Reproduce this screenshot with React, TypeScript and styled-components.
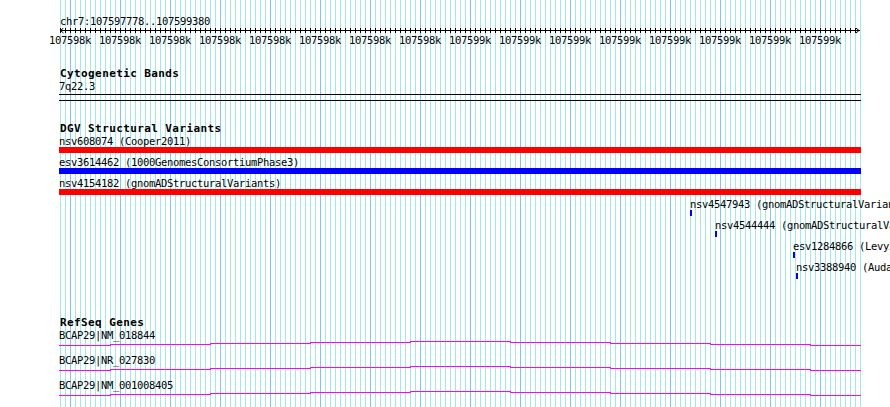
import React from 'react';
import styled, { createGlobalStyle } from 'styled-components';

const GlobalStyle = createGlobalStyle`
  html, body {
    margin: 0;
    padding: 0;
    overflow: hidden;
    background: #fff;
  }
  body {
    font-family: "DejaVu Sans Mono", "Liberation Mono", monospace;
    color: #000;
  }
`;

const TRACK_WIDTH = 802;

const Page = styled.div`
  padding-left: 59px;
  width: 890px;
  box-sizing: border-box;
`;

const TrackArea = styled.div`
  width: ${TRACK_WIDTH}px;
  min-height: 100vh;
  display: flex;
  flex-direction: column;
  background-color: #fff;
  background-image: linear-gradient(to right, #80c6f0 1px, transparent 1px),
    linear-gradient(to right, #a2e8e8 1px, transparent 1px);
  background-size: 50px 100%, 5px 100%;
  background-position: 11px 0, 1px 0;
`;

const Ruler = styled.div`
  padding-top: 15px;
  display: flex;
  flex-direction: column;
`;

const RefName = styled.div`
  font-size: 10.5px;
  letter-spacing: -0.32px;
  line-height: 13px;
  padding-left: 1px;
  white-space: nowrap;
`;

const Axis = styled.svg`
  display: block;
`;

const TickLabels = styled.div`
  display: flex;
  margin-left: -14px;
`;

const TickLabel = styled.div`
  flex: 0 0 50px;
  text-align: center;
  font-size: 10.5px;
  letter-spacing: -0.32px;
  line-height: 12px;
`;

const Track = styled.section<{ $gap: number }>`
  display: flex;
  flex-direction: column;
  margin-top: ${(p) => p.$gap}px;
`;

const TrackTitle = styled.h2`
  margin: 0;
  font-size: 11px;
  font-weight: bold;
  line-height: 13px;
  letter-spacing: 0.4px;
  padding-left: 1px;
  white-space: nowrap;
`;

const Label = styled.div`
  font-size: 10.5px;
  letter-spacing: -0.32px;
  line-height: 12px;
  white-space: nowrap;
`;

const Band = styled.div`
  margin-top: 2px;
  height: 7px;
  box-sizing: border-box;
  border-top: 1px solid #000;
  border-bottom: 1px solid #000;
`;

const FeatureRow = styled.div`
  height: 21px;
  display: flex;
  flex-direction: column;
  align-items: flex-start;
`;

const Bar = styled.div<{ $color: string }>`
  height: 6px;
  background: ${(p) => p.$color};
`;

const GeneRow = styled.div`
  height: 25px;
  display: flex;
  flex-direction: column;
`;

const GeneLine = styled.svg`
  display: block;
`;

const tickLabels = [
  ...Array(8).fill('107598k'),
  ...Array(8).fill('107599k'),
];

type Variant = { name: string; source: string; x: number; w: number; color: string };

const variants: Variant[] = [
  { name: 'nsv608074', source: 'Cooper2011', x: 0, w: TRACK_WIDTH, color: '#ff0000' },
  { name: 'esv3614462', source: '1000GenomesConsortiumPhase3', x: 0, w: TRACK_WIDTH, color: '#0000ff' },
  { name: 'nsv4154182', source: 'gnomADStructuralVariants', x: 0, w: TRACK_WIDTH, color: '#ff0000' },
  { name: 'nsv4547943', source: 'gnomADStructuralVariants', x: 631, w: 2, color: '#0000ff' },
  { name: 'nsv4544444', source: 'gnomADStructuralVariants', x: 656, w: 2, color: '#0000ff' },
  { name: 'esv1284866', source: 'Levy2007', x: 734, w: 2, color: '#0000ff' },
  { name: 'nsv3388940', source: 'Audano2019', x: 737, w: 2, color: '#0000ff' },
];

const genes = ['BCAP29|NM_018844', 'BCAP29|NR_027830', 'BCAP29|NM_001008405'];

const RulerAxis: React.FC = () => {
  const ticks = [];
  for (let x = 1; x < TRACK_WIDTH - 4; x += 5) {
    ticks.push(<line key={x} x1={x + 0.5} y1={0} x2={x + 0.5} y2={5} />);
  }
  return (
    <Axis width={TRACK_WIDTH} height={6} stroke="#000" strokeWidth={1} fill="none" shapeRendering="crispEdges">
      <line x1={1} y1={2.5} x2={TRACK_WIDTH - 1} y2={2.5} />
      {ticks}
      <polyline points="4.5,0 1.5,2.5 4.5,5" shapeRendering="auto" />
      <polyline points={`${TRACK_WIDTH - 5},0 ${TRACK_WIDTH - 2},2.5 ${TRACK_WIDTH - 5},5`} shapeRendering="auto" />
    </Axis>
  );
};

// intron line of a transcript, drawn with its small rise toward the middle
const offsets = [4, 3, 2, 1, 0, 1, 2, 3, 4];
const steps = [51, 151, 251, 351, 451, 551, 651, 751];

const Transcript: React.FC = () => {
  let d = `M0,${offsets[0] + 0.5}`;
  steps.forEach((s, i) => {
    d += ` H${s} V${offsets[i + 1] + 0.5}`;
  });
  d += ` H${TRACK_WIDTH}`;
  return (
    <GeneLine width={TRACK_WIDTH} height={13}>
      <path d={d} stroke="#ff00ff" strokeWidth={1} fill="none" shapeRendering="crispEdges" />
    </GeneLine>
  );
};

const App: React.FC = () => {
  return (
    <Page>
      <GlobalStyle />
      <TrackArea>
        <Ruler>
          <RefName>chr7:107597778..107599380</RefName>
          <RulerAxis />
          <TickLabels>
            {tickLabels.map((t, i) => (
              <TickLabel key={i}>{t}</TickLabel>
            ))}
          </TickLabels>
        </Ruler>

        <Track $gap={21}>
          <TrackTitle>Cytogenetic Bands</TrackTitle>
          <Label>7q22.3</Label>
          <Band />
        </Track>

        <Track $gap={21}>
          <TrackTitle>DGV Structural Variants</TrackTitle>
          {variants.map((v) => (
            <FeatureRow key={v.name} style={{ paddingLeft: v.x }}>
              <Label>
                {v.name} ({v.source})
              </Label>
              <Bar $color={v.color} style={{ width: v.w }} />
            </FeatureRow>
          ))}
        </Track>

        <Track $gap={34}>
          <TrackTitle>RefSeq Genes</TrackTitle>
          {genes.map((g) => (
            <GeneRow key={g}>
              <Label>{g}</Label>
              <Transcript />
            </GeneRow>
          ))}
        </Track>
      </TrackArea>
    </Page>
  );
};

export default App;
